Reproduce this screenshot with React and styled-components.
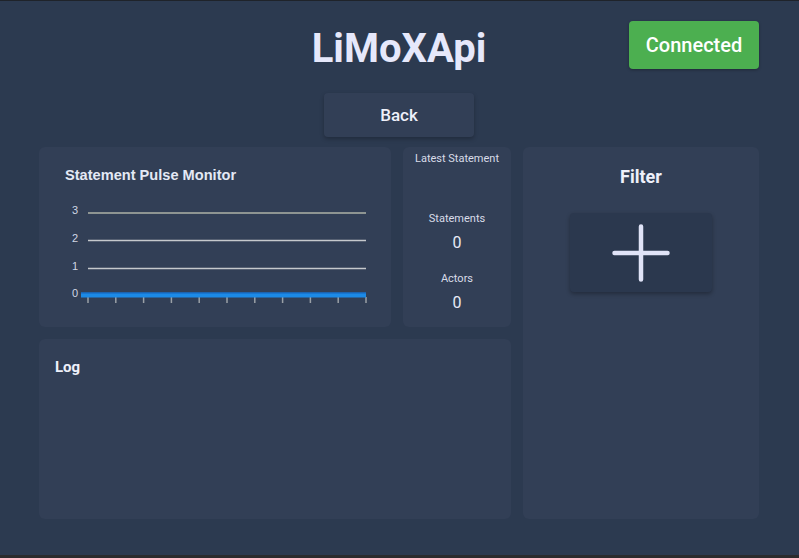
import React from 'react';
import styled, { createGlobalStyle } from 'styled-components';

const GlobalStyle = createGlobalStyle`
  html, body {
    margin: 0;
    padding: 0;
    background: #2c3a50;
  }
  * {
    box-sizing: border-box;
  }
`;

const Page = styled.div`
  height: 558px;
  padding: 0 40px 0 39px;
  background: #2c3a50;
  border-top: 1px solid #1f232a;
  border-bottom: 3px solid #2b2b2d;
  font-family: Roboto, "Liberation Sans", sans-serif;
  color: #e8ebf5;
  display: flex;
  flex-direction: column;
  align-items: center;
`;

const Header = styled.header`
  width: 100%;
  padding-top: 20px;
  display: grid;
  grid-template-columns: 1fr auto 1fr;
  align-items: end;
`;

const Title = styled.h1`
  grid-column: 2;
  margin: 0;
  font-size: 40px;
  line-height: 40px;
  font-weight: 700;
  color: #e6e8fb;
`;

const StatusButton = styled.button`
  justify-self: end;
  width: 130px;
  height: 48px;
  border: 0;
  border-radius: 4px;
  background: ${({ $online }) => ($online ? '#4caf50' : '#e05050')};
  color: #ffffff;
  font-family: Roboto, sans-serif;
  font-size: 20px;
  font-weight: 500;
  box-shadow: 0 1px 3px rgba(0, 0, 0, 0.3);
`;

const BackButton = styled.button`
  margin-top: 24px;
  width: 150px;
  height: 44px;
  border: 0;
  border-radius: 4px;
  background: #323f56;
  color: #eef0fa;
  font-family: Roboto, sans-serif;
  font-size: 17px;
  font-weight: 500;
  box-shadow: 0 2px 4px rgba(0, 0, 0, 0.25);
`;

const Grid = styled.main`
  margin-top: 10px;
  display: grid;
  grid-template-columns: 352px 108px 236px;
  grid-template-rows: 180px 180px;
  gap: 12px;
`;

const Card = styled.section`
  background: #323f56;
  border-radius: 6px;
  grid-column: ${({ $col }) => $col || 'auto'};
  grid-row: ${({ $row }) => $row || 'auto'};
`;

const ChartCard = styled(Card)`
  padding: 20px 26px 0 21px;
`;

const ChartTitle = styled.h2`
  margin: 0 0 16px 5px;
  font-family: "Liberation Sans", Arial, sans-serif;
  font-size: 14.6px;
  line-height: 17px;
  font-weight: 700;
  color: #e4e9f5;
`;

const LatestCard = styled(Card)`
  padding-top: 5px;
  display: flex;
  flex-direction: column;
  align-items: center;
  text-align: center;
`;

const SmallLabel = styled.div`
  font-size: 11px;
  line-height: 14px;
  color: #d8dce8;
`;

const StatList = styled.div`
  margin-top: 46px;
  display: flex;
  flex-direction: column;
  gap: 19px;
`;

const Stat = styled.div`
  display: flex;
  flex-direction: column;
  align-items: center;
  gap: 7px;
`;

const StatValue = styled.div`
  font-size: 16px;
  line-height: 20px;
  color: #e8ebf5;
`;

const FilterCard = styled(Card)`
  padding-top: 19px;
  display: flex;
  flex-direction: column;
  align-items: center;
`;

const CardHeading = styled.h2`
  margin: 0;
  font-size: ${({ $size }) => $size || 18}px;
  line-height: 22px;
  font-weight: 700;
  color: #eef0fa;
`;

const AddButton = styled.button`
  margin-top: 25px;
  width: 142px;
  height: 79px;
  border: 0;
  border-radius: 4px;
  background: #2b384e;
  box-shadow: 0 2px 4px rgba(0, 0, 0, 0.3);
  display: flex;
  align-items: center;
  justify-content: center;
  padding: 0;
`;

const LogCard = styled(Card)`
  padding: 17px 16px;
`;

const ChartSvg = styled.svg`
  display: block;
`;

const ticks = Array.from({ length: 11 }, (_, i) => 28 + i * 27.8);

const PulseChart = () => (
  <ChartSvg width="310" height="106" viewBox="0 0 310 106">
    <g fontFamily="Liberation Sans, Arial, sans-serif" fontSize="11" fill="#d0d6e4" textAnchor="end">
      <text x="18" y="14">3</text>
      <text x="18" y="42">2</text>
      <text x="18" y="70">1</text>
      <text x="18" y="97">0</text>
    </g>
    <line x1="28" y1="13" x2="306" y2="13" stroke="#8e9592" strokeWidth="2" />
    <line x1="28" y1="40.5" x2="306" y2="40.5" stroke="#c5c8cc" strokeWidth="1.3" />
    <line x1="28" y1="68.5" x2="306" y2="68.5" stroke="#c5c8cc" strokeWidth="1.3" />
    {ticks.map((x) => (
      <line key={x} x1={x} y1="97" x2={x} y2="103" stroke="#9aa0a6" strokeWidth="1.5" />
    ))}
    <rect x="21" y="92.5" width="285" height="5" fill="#1c8ae6" />
    <line x1="21" y1="93" x2="306" y2="93" stroke="#1565c0" strokeWidth="1" />
  </ChartSvg>
);

const PlusIcon = () => (
  <svg width="58" height="58" viewBox="0 0 58 58">
    <path d="M29 2.5 V55.5 M2.5 29 H55.5" stroke="#e0e3f7" strokeWidth="4.5" strokeLinecap="round" fill="none" />
  </svg>
);

const App = () => {
  return (
    <Page>
      <GlobalStyle />
      <Header>
        <Title>LiMoXApi</Title>
        <StatusButton $online>Connected</StatusButton>
      </Header>
      <BackButton>Back</BackButton>
      <Grid>
        <ChartCard $col="1" $row="1">
          <ChartTitle>Statement Pulse Monitor</ChartTitle>
          <PulseChart />
        </ChartCard>
        <LatestCard $col="2" $row="1">
          <SmallLabel>Latest Statement</SmallLabel>
          <StatList>
            <Stat>
              <SmallLabel>Statements</SmallLabel>
              <StatValue>0</StatValue>
            </Stat>
            <Stat>
              <SmallLabel>Actors</SmallLabel>
              <StatValue>0</StatValue>
            </Stat>
          </StatList>
        </LatestCard>
        <FilterCard $col="3" $row="1 / span 2">
          <CardHeading>Filter</CardHeading>
          <AddButton>
            <PlusIcon />
          </AddButton>
        </FilterCard>
        <LogCard $col="1 / span 2" $row="2">
          <CardHeading $size={15}>Log</CardHeading>
        </LogCard>
      </Grid>
    </Page>
  );
};

export default App;
